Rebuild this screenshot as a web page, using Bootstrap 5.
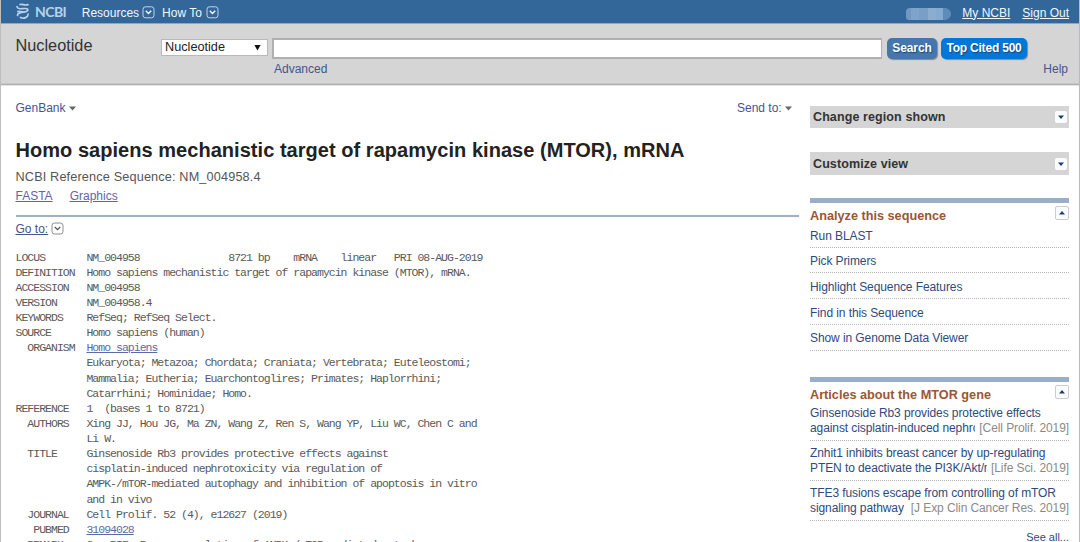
<!DOCTYPE html>
<html lang="en">
<head>
<meta charset="utf-8">
<meta name="viewport" content="width=device-width, initial-scale=1">
<title>Homo sapiens mechanistic target of rapamycin kinase (MTOR), mRNA - Nucleotide - NCBI</title>
<link href="https://cdn.jsdelivr.net/npm/bootstrap@5.3.0/dist/css/bootstrap.min.css" rel="stylesheet">
<style>
body{font-family:"Liberation Sans",Arial,sans-serif;font-size:12px;line-height:14px;color:#444;height:542px;overflow:hidden;background:#fff}
.page{height:542px;border-left:1px solid #bdbdbd;border-right:1px solid #b9babf;overflow:hidden}
a{color:#45548c;text-decoration:none}
a.ul{text-decoration:underline}
.topbar{height:24px;background:#336699;border-bottom:1px solid #8aa9c8;padding:2px 10px 0 14px;color:#fff;font-size:12px}
.topbar a{color:#f2f7fc}
.brand{font-family:Lato,"Liberation Sans",sans-serif;font-size:14px;font-weight:700;letter-spacing:-.55px;color:#b5d3ee;margin:-2px 0 0 4px}
.blurred{width:45px;height:12px;border-radius:4px 6px 6px 3px;background:linear-gradient(90deg,#7099c2 0 12%,#7fa4ca 12% 28%,#7a9fc7 28% 48%,#8aadd0 48% 66%,#86a9ce 66% 83%,#5e8cba 83%);margin:2px 11px 0 0}
.searchbar{height:61px;background:#d5d5d5;border-bottom:1px solid #b2b2b2;box-shadow:inset 0 -1px #c6c6c6,0 1px #e4e4e4;padding:13px 10px 0 14.5px}
.dbname{width:145.5px;font-size:16.3px;line-height:17px;color:#333}
.dbselect{width:107px;height:17px;background:#fff;border:1px solid #b9b9b9;color:#222;font-size:12.7px;line-height:15px;padding:0 6px 0 3px;margin:2px 4px 0 0}
.query{width:610px;height:21px;border:2px solid #b0b0b0;border-right-width:1px;border-radius:0;padding:0;margin:1px 5px 0 0;background:#fff}
.sbtn{height:21px;border:0;border-radius:5px;padding:0;font-size:12px;line-height:21px;font-weight:700;color:#fff;box-shadow:1px 1px 1px #888;text-shadow:1px 1px 1px #1b4770;margin-top:1px}
.sbtn.go{width:50px;background:#4577ad;margin-right:4px;letter-spacing:-.1px}
.sbtn.cited{width:86px;background:#0077d9;letter-spacing:-.2px}
.sublinks{padding:3px 1px 0 258.5px;line-height:14px}
.record{width:783.5px;margin-left:14.5px}
.side{width:259px;margin-left:11px}
.tools{padding-top:16px;height:50px}
.rtitle{font-size:20px;line-height:24px;font-weight:700;color:#222;letter-spacing:.04px;margin:3px 0 0;white-space:nowrap}
.refseq{font-size:12.7px;letter-spacing:.15px;line-height:16px;margin-top:7px;color:#555}
.formats{margin-top:4px;line-height:14px}
.formats a{color:#6464a4}
.goto{border-top:2px solid #9fb1c8;margin-top:12px;padding-top:5px;height:34.500px}
.flat{font-family:"Liberation Mono",monospace;font-size:11.5px;letter-spacing:-.99px;line-height:15.13px;color:#5a5a5a;margin:0;overflow:visible}
.flat a{color:#5c6ba8}
.flat a,.goto a{text-underline-offset:1px}
.pbar{height:22px;background:#d5d5d5;padding:0 2px 0 3px;color:#333;font-weight:700;font-size:12.5px;letter-spacing:.1px}
.tgl{width:12px;height:12px;background:#fbfcfe;border-radius:2px}
.tgl.up{width:14px;height:14px;border:1px solid #c9ccd6}
.sec{border-top:5px solid #98afc7}
.sechead{height:20px;color:#985735;font-weight:700;font-size:12.7px;padding-top:3px}
.side a{color:#2f4a7d}
.links,.arts{letter-spacing:-.09px}
.links li{height:25.75px;border-bottom:1px dotted #b5b5b5;padding-top:6.500px}
.links li:first-child{height:19.5px;padding-top:.5px}
.arts li{height:40px;border-bottom:1px dotted #b5b5b5;padding-top:5.500px;line-height:14.800px;white-space:nowrap}
.arts li:first-child{height:35px;padding-top:.5px}
.arts .src{color:#8a8a8a}
.more{font-size:11px;padding-top:9px}
</style>
</head>
<body>
<div class="page">
  <header class="topbar d-flex align-items-center">
    <svg width="16" height="18" viewBox="0 0 16 18" style="margin-top:-3px" fill="none" stroke="#b5d3ee" stroke-width="1.700" stroke-linecap="round"><path d="M5 2.500C7.500 1.500 9.500 4 13 2.600"/><path d="M2 4.500C2.500 8.300 7 6.300 10.500 6.500C14.500 7 13 9.800 9 10.200C5 10.600 2.300 11 2.500 13.500"/><path d="M2.800 9.500C4.500 8.800 6 9.800 8 9.900"/><path d="M5.500 15.500C9 17 13 15.500 13.200 12"/></svg>
    <span class="brand">NCBI</span>
    <a href="#" style="margin-left:15.500px">Resources</a>
    <svg style="margin-left:2.500px" width="13" height="13" viewBox="0 0 13 13" fill="none" stroke="#c3d6e9"><rect x="1" y=".8" width="11" height="11" rx="2.500"/><path d="M3.800 4.800l2.700 2.700 2.700-2.700" stroke="#fff" stroke-width="1.400"/></svg>
    <a href="#" style="margin-left:7.500px">How To</a>
    <svg style="margin-left:4px" width="13" height="13" viewBox="0 0 13 13" fill="none" stroke="#c3d6e9"><rect x="1" y=".8" width="11" height="11" rx="2.500"/><path d="M3.800 4.800l2.700 2.700 2.700-2.700" stroke="#fff" stroke-width="1.400"/></svg>
    <span class="blurred ms-auto"></span>
    <a href="#" class="ul">My NCBI</a>
    <a href="#" class="ul" style="margin-left:12px">Sign Out</a>
  </header>
  <div class="searchbar">
    <div class="d-flex align-items-start">
      <div class="dbname">Nucleotide</div>
      <div class="dbselect d-flex justify-content-between"><span>Nucleotide</span><svg width="7" height="15" viewBox="0 0 7 15"><path d="M.4 5h6.200L3.500 10.500z" fill="#111"/></svg></div>
      <input class="query form-control" type="text" aria-label="Search term">
      <button class="btn sbtn go">Search</button>
      <button class="btn sbtn cited">Top Cited 500</button>
    </div>
    <div class="sublinks d-flex justify-content-between"><a href="#">Advanced</a><a href="#">Help</a></div>
  </div>
  <div class="d-flex align-items-start">
    <main class="record">
      <div class="tools d-flex justify-content-between">
        <a href="#">GenBank <svg width="7" height="5" viewBox="0 0 7 5"><path d="M0 0.500h7L3.500 4.500z" fill="#666"/></svg></a>
        <a href="#" style="margin-right:7px">Send to: <svg width="7" height="5" viewBox="0 0 7 5"><path d="M0 0.500h7L3.500 4.500z" fill="#666"/></svg></a>
      </div>
      <h1 class="rtitle">Homo sapiens mechanistic target of rapamycin kinase (MTOR), mRNA</h1>
      <div class="refseq">NCBI Reference Sequence: NM_004958.4</div>
      <div class="formats d-flex"><a href="#" class="ul">FASTA</a><a href="#" class="ul" style="margin-left:17px">Graphics</a></div>
      <div class="goto d-flex align-items-start"><a href="#" class="ul">Go to:</a><svg style="margin-left:3px" width="13" height="13" viewBox="0 0 13 13" fill="none" stroke="#8c8c8c"><rect x="1" y="1" width="11" height="11" rx="2.500"/><path d="M3.800 5l2.700 2.700L9.200 5" stroke="#555" stroke-width="1.300"/></svg></div>
<pre class="flat">LOCUS       NM_004958               8721 bp    mRNA    linear   PRI 08-AUG-2019
DEFINITION  Homo sapiens mechanistic target of rapamycin kinase (MTOR), mRNA.
ACCESSION   NM_004958
VERSION     NM_004958.4
KEYWORDS    RefSeq; RefSeq Select.
SOURCE      Homo sapiens (human)
  ORGANISM  <a href="#" class="ul">Homo sapiens</a>
            Eukaryota; Metazoa; Chordata; Craniata; Vertebrata; Euteleostomi;
            Mammalia; Eutheria; Euarchontoglires; Primates; Haplorrhini;
            Catarrhini; Hominidae; Homo.
REFERENCE   1  (bases 1 to 8721)
  AUTHORS   Xing JJ, Hou JG, Ma ZN, Wang Z, Ren S, Wang YP, Liu WC, Chen C and
            Li W.
  TITLE     Ginsenoside Rb3 provides protective effects against
            cisplatin-induced nephrotoxicity via regulation of
            AMPK-/mTOR-mediated autophagy and inhibition of apoptosis in vitro
            and in vivo
  JOURNAL   Cell Prolif. 52 (4), e12627 (2019)
   PUBMED   <a href="#" class="ul">31094028</a>
  REMARK    GeneRIF: Proper regulation of AMPK-/mTOR-mediated autoph</pre>
    </main>
    <aside class="side">
      <div class="pbar d-flex align-items-center justify-content-between" style="margin-top:21px"><span>Change region shown</span><span class="tgl d-flex"><svg width="12" height="12"><path d="M3 4.500h6L6 8z" fill="#1f3a78"/></svg></span></div>
      <div class="pbar d-flex align-items-center justify-content-between" style="margin-top:24px;height:23px"><span>Customize view</span><span class="tgl d-flex"><svg width="12" height="12"><path d="M3 4.500h6L6 8z" fill="#1f3a78"/></svg></span></div>
      <section class="sec" style="margin-top:23px">
        <div class="sechead d-flex justify-content-between"><span style="padding-top:3px">Analyze this sequence</span><span class="tgl up d-flex"><svg width="12" height="12"><path d="M3 7.500h6L6 4z" fill="#1f3a78"/></svg></span></div>
        <ul class="links list-unstyled mb-0" style="padding-top:5px">
          <li><a href="#">Run BLAST</a></li><li><a href="#">Pick Primers</a></li><li><a href="#">Highlight Sequence Features</a></li><li><a href="#">Find in this Sequence</a></li><li><a href="#">Show in Genome Data Viewer</a></li>
        </ul>
      </section>
      <section class="sec" style="margin-top:26px">
        <div class="sechead d-flex justify-content-between"><span style="padding-top:3px">Articles about the MTOR gene</span><span class="tgl up d-flex"><svg width="12" height="12"><path d="M3 7.500h6L6 4z" fill="#1f3a78"/></svg></span></div>
        <ul class="arts list-unstyled mb-0" style="padding-top:4px">
          <li><a href="#">Ginsenoside Rb3 provides protective effects</a><div class="d-flex justify-content-between"><a href="#" class="overflow-hidden">against cisplatin-induced nephrotoxicity</a><span class="src ps-1">[Cell Prolif. 2019]</span></div></li>
          <li><a href="#">Znhit1 inhibits breast cancer by up-regulating</a><div class="d-flex justify-content-between"><a href="#" class="overflow-hidden">PTEN to deactivate the PI3K/Akt/mTOR</a><span class="src ps-1">[Life Sci. 2019]</span></div></li>
          <li><a href="#">TFE3 fusions escape from controlling of mTOR</a><div class="d-flex justify-content-between"><a href="#">signaling pathway</a><span class="src">[J Exp Clin Cancer Res. 2019]</span></div></li>
        </ul>
        <div class="more text-end"><a href="#">See all...</a></div>
      </section>
    </aside>
  </div>
</div>
<script src="https://cdn.jsdelivr.net/npm/bootstrap@5.3.0/dist/js/bootstrap.bundle.min.js"></script>
</body>
</html>
